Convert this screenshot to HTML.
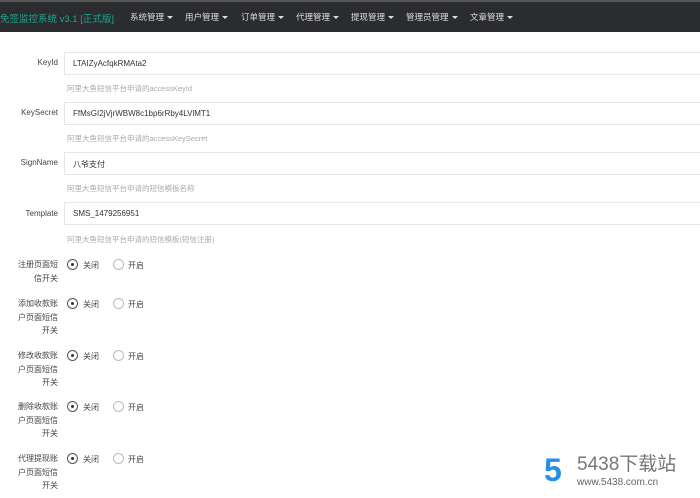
<!DOCTYPE html>
<html><head><meta charset="utf-8"><style>
*{margin:0;padding:0;box-sizing:border-box}
body{width:700px;height:498px;overflow:hidden;background:#fff;font-family:"Liberation Sans","Noto Sans CJK SC",sans-serif;color:#333;position:relative}
.nav{position:absolute;left:0;top:0;width:700px;height:32px;background:#2a2c2f;border-top:2px solid #555}
.nav span{position:absolute;top:9px;font-size:8.5px;color:#ddd}
.brand{color:#1ba88e!important;font-size:9.5px!important;left:0}
.car{display:inline-block;border-left:3px solid transparent;border-right:3px solid transparent;border-top:3px solid #ddd;margin-left:3px;vertical-align:1px}
.lab{position:absolute;right:642px;font-size:8px;color:#444;text-align:right}
.inp{position:absolute;left:64px;width:640px;height:23px;border:1px solid #e6e6e6;font-size:8px;padding:6px 8px;color:#333}
.help{position:absolute;left:67px;font-size:7.5px;color:#aaa}
.rl{position:absolute;left:14px;width:44px;font-size:8px;line-height:13.5px;text-align:right;color:#444}
.rad{position:absolute;width:11px;height:11px;border:1px solid #bbb;border-radius:50%}
.rad.on{border-color:#555}
.rad.on::after{content:"";position:absolute;left:3px;top:3px;width:3px;height:3px;border-radius:50%;background:#333}
.rt{position:absolute;font-size:8px;color:#444}
</style></head><body>
<div class="nav">
<span class="brand">免签监控系统 v3.1 [正式版]</span>
<span style="left:130px">系统管理<i class="car"></i></span>
<span style="left:185px">用户管理<i class="car"></i></span>
<span style="left:241px">订单管理<i class="car"></i></span>
<span style="left:296px">代理管理<i class="car"></i></span>
<span style="left:351px">提现管理<i class="car"></i></span>
<span style="left:406px">管理员管理<i class="car"></i></span>
<span style="left:470px">文章管理<i class="car"></i></span>
</div>

<div class="lab" style="top:58px">KeyId</div>
<div class="inp" style="top:52px">LTAIZyAcfqkRMAta2</div>
<div class="help" style="top:83px">阿里大鱼短信平台申请的accessKeyId</div>

<div class="lab" style="top:108px">KeySecret</div>
<div class="inp" style="top:102px">FfMsGI2jVjrWBW8c1bp6rRby4LVlMT1</div>
<div class="help" style="top:133px">阿里大鱼短信平台申请的accessKeySecret</div>

<div class="lab" style="top:158px">SignName</div>
<div class="inp" style="top:152px">八爷支付</div>
<div class="help" style="top:183px">阿里大鱼短信平台申请的短信模板名称</div>

<div class="lab" style="top:209px">Template</div>
<div class="inp" style="top:202px">SMS_1479256951</div>
<div class="help" style="top:234px">阿里大鱼短信平台申请的短信模板(短信注册)</div>

<div class="rl" style="top:258px">注册页面短信开关</div>
<div class="rad on" style="left:67px;top:259px"></div><div class="rt" style="left:83px;top:260px">关闭</div>
<div class="rad" style="left:113px;top:259px"></div><div class="rt" style="left:128px;top:260px">开启</div>

<div class="rl" style="top:297px">添加收款账户页面短信开关</div>
<div class="rad on" style="left:67px;top:298px"></div><div class="rt" style="left:83px;top:299px">关闭</div>
<div class="rad" style="left:113px;top:298px"></div><div class="rt" style="left:128px;top:299px">开启</div>

<div class="rl" style="top:349px">修改收款账户页面短信开关</div>
<div class="rad on" style="left:67px;top:350px"></div><div class="rt" style="left:83px;top:351px">关闭</div>
<div class="rad" style="left:113px;top:350px"></div><div class="rt" style="left:128px;top:351px">开启</div>

<div class="rl" style="top:400px">删除收款账户页面短信开关</div>
<div class="rad on" style="left:67px;top:401px"></div><div class="rt" style="left:83px;top:402px">关闭</div>
<div class="rad" style="left:113px;top:401px"></div><div class="rt" style="left:128px;top:402px">开启</div>

<div class="rl" style="top:452px">代理提现账户页面短信开关</div>
<div class="rad on" style="left:67px;top:453px"></div><div class="rt" style="left:83px;top:454px">关闭</div>
<div class="rad" style="left:113px;top:453px"></div><div class="rt" style="left:128px;top:454px">开启</div>

<div style="position:absolute;left:544px;top:454px;font-size:32px;font-weight:bold;color:#2a8de8;line-height:32px">5</div>
<div style="position:absolute;left:577px;top:455px;font-size:19px;color:#777;line-height:20px">5438下载站</div>
<div style="position:absolute;left:577px;top:477px;font-size:10px;color:#666;line-height:11px">www.5438.com.cn</div>
</body></html>
